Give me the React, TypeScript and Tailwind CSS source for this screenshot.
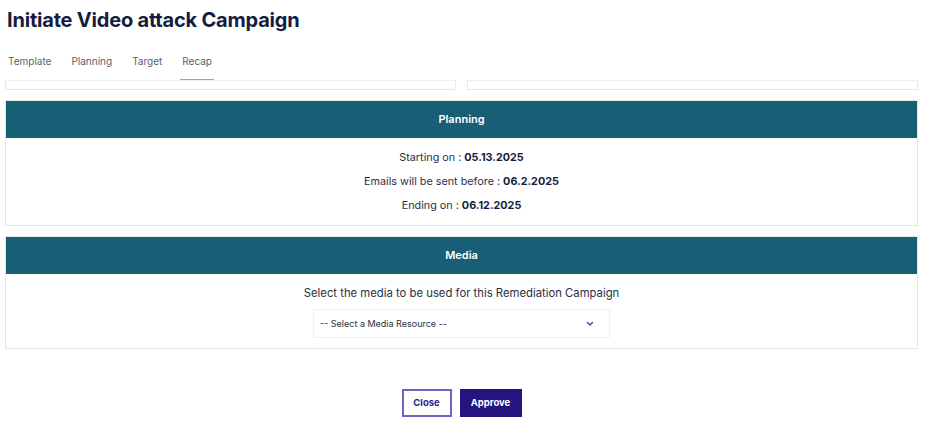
import React from "react";

export default function App() {
  return (
    <div className="w-[938px] h-[423px] bg-white overflow-hidden" style={{ fontFamily: "Inter, 'Noto Sans', sans-serif" }}>
      <div className="px-[5px] w-[923px]">
        <h1 className="pt-[7px] pl-[2px] text-[20px] leading-[26px] font-bold text-[#161c3f] tracking-[-0.2px]">
          Initiate Video attack Campaign
        </h1>
        <div className="mt-[21px] flex gap-[20px] pl-[3px] text-[10px] text-[#5a5f6e]">
          <div className="pb-[10px]">Template</div>
          <div className="pb-[10px]">Planning</div>
          <div className="pb-[10px]">Target</div>
          <div className="pb-[10px] border-b-2 border-[#9aa3b5] px-[2px] -mx-[2px]">Recap</div>
        </div>
        <div className="flex gap-[11px] -mt-px w-[913px]">
          <div className="flex-1 h-[10px] border border-t-[#eeeeee] border-[#e8e8e8]"></div>
          <div className="flex-1 h-[10px] border border-t-[#eeeeee] border-[#e8e8e8]"></div>
        </div>

        <div className="mt-[10px] w-[913px] border border-[#e6e6e6]">
          <div className="h-[37px] bg-[#185e74] flex items-center justify-center text-white text-[11px] font-semibold">Planning</div>
          <div className="flex flex-col items-center text-[10.8px] text-[#2a2f45] pt-[12px] pb-[11px] gap-[8px]">
            <div className="leading-[16px]">Starting on : <span className="font-bold text-[#161c3f]">05.13.2025</span></div>
            <div className="leading-[16px]">Emails will be sent before : <span className="font-bold text-[#161c3f]">06.2.2025</span></div>
            <div className="leading-[16px]">Ending on : <span className="font-bold text-[#161c3f]">06.12.2025</span></div>
          </div>
        </div>

        <div className="mt-[10px] w-[913px] border border-[#e6e6e6]">
          <div className="h-[37px] bg-[#185e74] flex items-center justify-center text-white text-[11px] font-semibold">Media</div>
          <div className="flex flex-col items-center pt-[11px] pb-[10px]">
            <div className="text-[11.3px] leading-[16px] text-[#2a2f45]">Select the media to be used for this Remediation Campaign</div>
            <div className="mt-[8px] w-[297px] h-[29px] border border-[#eeeeee] rounded-[2px] flex items-center justify-between pl-[6px] pr-[15px] text-[9px] text-[#2a2f45]">
              <span>-- Select a Media Resource --</span>
              <svg width="8" height="6" viewBox="0 0 8 6" fill="none">
                <path d="M1.5 1.5 L4 4 L6.5 1.5" stroke="#4a3aa8" strokeWidth="1.4" strokeLinecap="round" strokeLinejoin="round" />
              </svg>
            </div>
          </div>
        </div>

        <div className="mt-[40px] w-[913px] flex justify-center gap-[8px]">
          <button className="w-[50px] h-[28px] border-2 border-[#6f62c4] text-[#2a1f8a] text-[9.5px] font-bold bg-white">Close</button>
          <button className="w-[62px] h-[28px] bg-[#23147f] text-white text-[9.5px] font-bold">Approve</button>
        </div>
      </div>
    </div>
  );
}
